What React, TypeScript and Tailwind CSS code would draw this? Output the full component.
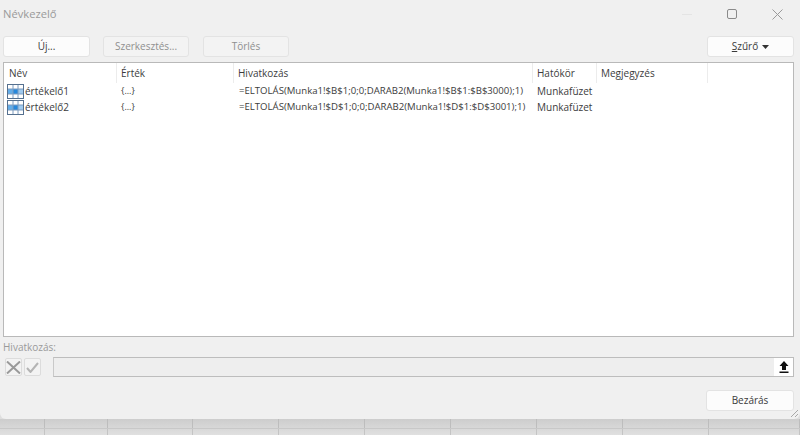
const font = "font-['Open_Sans','Noto_Sans',sans-serif]"

const columns = [
  { label: "Név", width: "w-[113px] pl-[5px]" },
  { label: "Érték", width: "w-[117px] pl-[4px]" },
  { label: "Hivatkozás", width: "w-[299px] pl-[4px]" },
  { label: "Hatókör", width: "w-[64px] pl-[4px]" },
  { label: "Megjegyzés", width: "w-[111px] pl-[4px]" },
]

const rows = [
  { name: "értékelő1", formula: "=ELTOLÁS(Munka1!$B$1;0;0;DARAB2(Munka1!$B$1:$B$3000);1)" },
  { name: "értékelő2", formula: "=ELTOLÁS(Munka1!$D$1;0;0;DARAB2(Munka1!$D$1:$D$3001);1)" },
]

const sheetColumns = [45, 63, 85, 86, 86, 86, 86, 86, 86, 91]

function TableIcon() {
  return (
    <svg width="17" height="15" viewBox="0 0 17 15" className="shrink-0">
      <rect x="0.5" y="0.5" width="16" height="14" fill="#fff" stroke="#55708f" />
      <rect x="1" y="5" width="5" height="5" fill="#62ade9" />
      <rect x="6" y="5" width="5" height="5" fill="#2688dc" />
      <rect x="11" y="5" width="5" height="5" fill="#9fcaef" />
      <path d="M6 1v13M11 1v13M1 5h15M1 10h15" stroke="#7d9cc0" strokeWidth="1" fill="none" />
    </svg>
  )
}

function Button({ label, disabled, className }: { label: React.ReactNode; disabled?: boolean; className: string }) {
  return (
    <div
      className={`flex h-[21px] items-center justify-center rounded-[3px] border border-[#e3e3e3] text-[10px] ${
        disabled ? "bg-[#f3f3f3] text-[#8f8f8f]" : "bg-[#fcfcfc] text-[#3a3a3a]"
      } ${className}`}
    >
      {label}
    </div>
  )
}

export default function App() {
  return (
    <div className={`flex h-[435px] w-[800px] flex-col overflow-hidden bg-[#dedede] ${font}`}>
      <div className="relative z-10 flex h-[419px] shrink-0 flex-col rounded-b-[6px] bg-[#f0f0f0] px-[3px]">
        <div className="flex h-[36px] shrink-0 items-center justify-between pb-[8px] pr-[14px]">
          <span className="text-[11.2px] text-[#9a9a9a]">Névkezelő</span>
          <div className="flex items-center gap-[35px]">
            <div className="h-px w-[10px] bg-[#e4e4e4]" />
            <svg width="10" height="10" viewBox="0 0 10 10">
              <rect x="0.5" y="0.5" width="9" height="9" rx="1.5" fill="none" stroke="#8a8a8a" />
            </svg>
            <svg width="11" height="11" viewBox="0 0 11 11">
              <path d="M0.5 0.5l10 10M10.5 0.5l-10 10" fill="none" stroke="#9a9a9a" />
            </svg>
          </div>
        </div>

        <div className="flex shrink-0 items-center pb-[5px]">
          <Button label="Új..." className="w-[87px]" />
          <Button label="Szerkesztés..." disabled className="ml-[13px] w-[86px]" />
          <Button label="Törlés" disabled className="ml-[14px] w-[86px]" />
          <Button
            className="ml-auto mr-[3px] w-[87px]"
            label={
              <span className="flex items-center gap-[4px]">
                <span>
                  <span className="underline">S</span>zűrő
                </span>
                <svg width="7" height="4" viewBox="0 0 7 4">
                  <path d="M0 0h7L3.5 4z" fill="#333" />
                </svg>
              </span>
            }
          />
        </div>

        <div className="h-[275px] w-[791px] shrink-0 border border-[#b9b9b9] bg-white text-[10px] text-[#3c3c3c]">
          <div className="flex h-[20px] items-center">
            {columns.map((c) => (
              <div key={c.label} className={`flex h-full items-center border-r border-[#ececec] ${c.width}`}>
                {c.label}
              </div>
            ))}
          </div>
          {rows.map((r) => (
            <div key={r.name} className="flex h-[16px] items-center">
              <div className="flex w-[113px] items-center gap-[1px] pl-[3px]">
                <TableIcon />
                <span>{r.name}</span>
              </div>
              <div className="w-[117px] pl-[4px] text-[9px]">{"{...}"}</div>
              <div className="w-[299px] whitespace-nowrap pl-[5px] text-[9.6px]">{r.formula}</div>
              <div className="w-[64px] pl-[4px]">Munkafüzet</div>
            </div>
          ))}
        </div>

        <div className="pt-[3px] text-[10px] leading-[14px] text-[#9a9a9a]">Hivatkozás:</div>

        <div className="flex items-center pt-[3px]">
          <div className="ml-[2px] flex h-[18px] w-[17px] items-center justify-center rounded-[2px] border border-[#dcdcdc] bg-[#f3f3f3]">
            <svg width="15" height="13" viewBox="0 0 15 13">
              <path d="M1 0.5l13 12M14 0.5l-13 12" fill="none" stroke="#9a9a9a" strokeWidth="2" />
            </svg>
          </div>
          <div className="ml-[2px] flex h-[18px] w-[17px] items-center justify-center rounded-[2px] border border-[#dcdcdc] bg-[#f3f3f3]">
            <svg width="13" height="11" viewBox="0 0 13 11">
              <path d="M1 6l3.5 4L12 1" fill="none" stroke="#b4b4b4" strokeWidth="2" />
            </svg>
          </div>
          <div className="ml-[12px] flex h-[20px] w-[741px] items-center justify-end border border-[#bdbdbd] border-l-[#c9c9c9] bg-[#eeeeee] pl-[1px]">
            <div className="flex h-[18px] w-[19px] items-center justify-center bg-white">
              <svg width="10" height="12" viewBox="0 0 10 12">
                <path d="M5 0L0.5 5H3v4h4V5h2.5zM0.5 10.5h9V12h-9z" fill="#111" />
              </svg>
            </div>
          </div>
        </div>

        <div className="flex justify-end pr-[3px] pt-[13px]">
          <Button label="Bezárás" className="w-[88px]" />
        </div>

        <svg width="10" height="10" viewBox="0 0 10 10" className="absolute bottom-[1px] right-[1px]">
          <path d="M9 2L2 9M9 6L6 9" fill="none" stroke="#a8a8a8" />
        </svg>
      </div>

      <div className="flex min-h-0 flex-1 flex-col bg-gradient-to-b from-[#cdcdcd] to-[#e0e0e0]">
        <div className="flex h-[10px] border-b border-[#c8c8c8]">
          {sheetColumns.map((w, i) => (
            <div key={i} style={{ width: w }} className="border-r border-[#bdbdbd]" />
          ))}
        </div>
        <div className="flex flex-1">
          {sheetColumns.map((w, i) => (
            <div key={i} style={{ width: w }} className="border-r border-[#c4c4c4]" />
          ))}
        </div>
      </div>
    </div>
  )
}
